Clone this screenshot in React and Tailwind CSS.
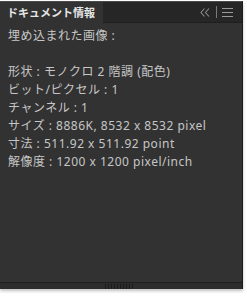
export default function App() {
  const lines = [
    "埋め込まれた画像 :",
    "\u00a0",
    "形状 : モノクロ 2 階調 (配色)",
    "ビット/ピクセル : 1",
    "チャンネル : 1",
    "サイズ : 8886K, 8532 x 8532 pixel",
    "寸法 : 511.92 x 511.92 point",
    "解像度 : 1200 x 1200 pixel/inch",
  ];
  return (
    <div className="w-[247px] h-[297px] bg-white pt-[1px]" style={{ fontFamily: '"Noto Sans", "Noto Sans CJK JP", sans-serif' }}>
      <div className="w-[243px] h-[288px] flex flex-col bg-[#323232] border-r border-[#1c1c1c] border-t border-t-[#4a4a4a] shadow-[0_2px_3px_rgba(0,0,0,0.25)]">
        <div className="h-[21px] flex items-stretch bg-[#262626] shrink-0">
          <div className="w-[103px] bg-[#323232] flex items-center pl-[7px] text-[11px] font-bold text-[#e6e6e6] leading-none whitespace-nowrap overflow-hidden">
            ドキュメント情報
          </div>
          <div className="flex-1 flex items-center justify-end pr-[9px] border-b border-[#1e1e1e]">
            <svg width="10" height="9" viewBox="0 0 10 9" className="mr-[6px]">
              <path d="M4.5 0.5 L1 4.5 L4.5 8.5 M9 0.5 L5.5 4.5 L9 8.5" stroke="#8a8a8a" strokeWidth="1.1" fill="none" />
            </svg>
            <div className="w-px h-[12px] bg-[#7a7a7a] mr-[5px]" />
            <svg width="11" height="9" viewBox="0 0 11 9">
              <path d="M0 0.5 H11 M0 4.5 H11 M0 8.5 H11" stroke="#9a9a9a" strokeWidth="1" fill="none" />
            </svg>
          </div>
        </div>
        <div className="flex-1 pt-[4px] pl-[8px] text-[12px] leading-[18px] tracking-[0.5px] text-[#c6c6c6]">
          {lines.map((l, i) => (
            <div key={i} className="whitespace-nowrap">{l}</div>
          ))}
        </div>
        <div className="h-[7px] shrink-0 border-t border-[#1e1e1e] bg-[#2c2c2c] flex justify-center items-center">
          <div className="flex gap-[2px] ml-[-4px]">
            {Array.from({ length: 10 }).map((_, i) => (
              <div key={i} className="w-px h-[5px] bg-[#1a1a1a]" />
            ))}
          </div>
        </div>
      </div>
    </div>
  );
}
